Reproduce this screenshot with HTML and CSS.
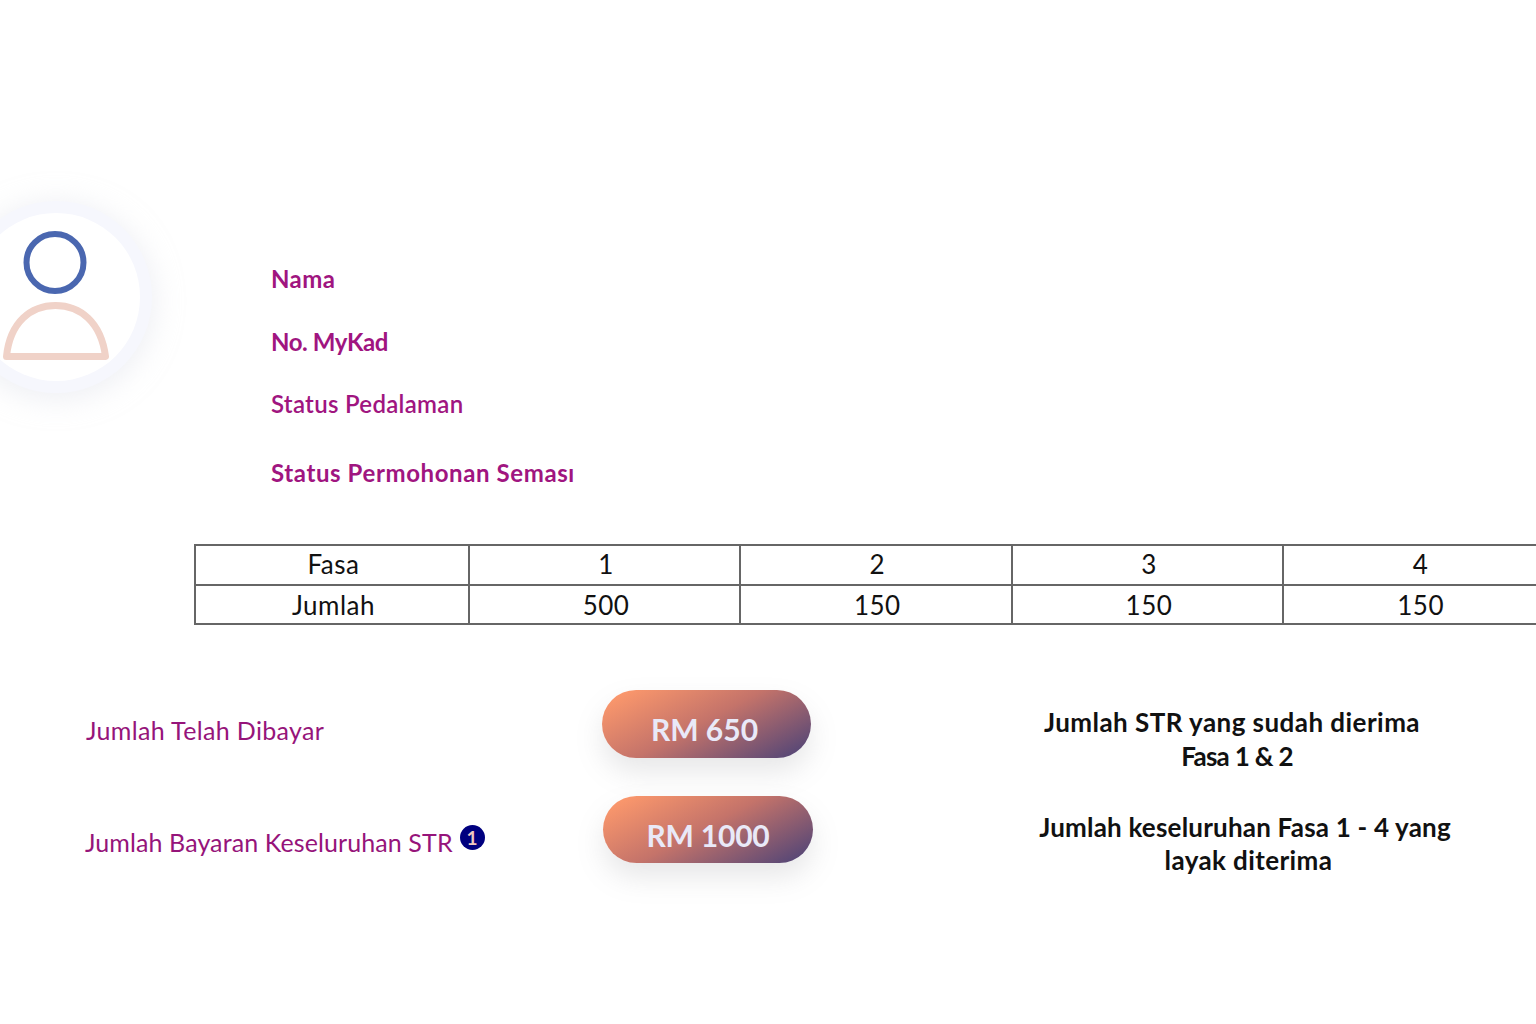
FILE: index.html
```html
<!DOCTYPE html>
<html lang="ms">
<head>
<meta charset="utf-8">
<title>Maklumat STR</title>
<link rel="stylesheet" href="styles.css">
</head>
<body>
<main class="page">
  <section class="profile">
    <div class="avatar">
      <svg class="avatar-icon" width="106" height="130" viewBox="0 0 106 130" aria-hidden="true">
        <circle cx="52" cy="31.500" r="28.500" class="head"/>
        <path d="M3.500 125.500C7 91 28 74.500 52.500 74.500S98 91 102.500 125.500Z" class="torso"/>
      </svg>
    </div>
    <ul class="fields">
      <li class="field field-name">Nama</li>
      <li class="field field-id">No. MyKad</li>
      <li class="field field-area">Status Pedalaman</li>
      <li class="field field-status">Status Permohonan Semasɪ</li>
    </ul>
  </section>

  <table class="phases">
    <tbody>
      <tr class="phase-head"><th>Fasa</th><td>1</td><td>2</td><td>3</td><td>4</td></tr>
      <tr class="phase-amount"><th>Jumlah</th><td>500</td><td>150</td><td>150</td><td>150</td></tr>
    </tbody>
  </table>

  <section class="payments">
    <div class="payment payment-paid">
      <p class="payment-label">Jumlah Telah Dibayar</p>
      <div class="pill">RM 650</div>
      <p class="payment-note"><span class="note-line">Jumlah STR yang sudah dierima</span><span class="note-line note-sub">Fasa 1 &amp; 2</span></p>
    </div>
    <div class="payment payment-total">
      <p class="payment-label">Jumlah Bayaran Keseluruhan STR <span class="badge">1</span></p>
      <div class="pill">RM 1000</div>
      <p class="payment-note"><span class="note-line">Jumlah keseluruhan Fasa 1 - 4 yang</span><span class="note-line note-sub">layak diterima</span></p>
    </div>
  </section>
</main>
</body>
</html>
```
FILE: styles.css
```css
* { box-sizing: border-box; }
html, body { margin: 0; height: 100%; }
body {
  background: #fff;
  overflow: hidden;
  font-family: Lato, "Noto Sans", sans-serif;
}
.page { width: 1536px; height: 1024px; padding-top: 200px; overflow: hidden; }

.profile { display: flex; height: 344px; }
.avatar {
  flex: none;
  width: 168px;
  height: 168px;
  margin: 13px 0 0 -28px;
  display: flex;
  justify-content: center;
  padding-top: 18px;
  border-radius: 50%;
  background: #fff;
  box-shadow: 0 0 0 12px #f6f7fd, 0 4px 26px 16px rgba(225, 228, 235, .5);
}
.avatar-icon { flex: none; display: block; }
.head { fill: none; stroke: #4a67b0; stroke-width: 6; }
.torso { fill: none; stroke: #f0d2c8; stroke-width: 7; stroke-linejoin: round; }

.fields { list-style: none; margin: 0 0 0 131px; padding: 64px 0 0; }
.field {
  color: #a01580;
  font-size: 24px;
  font-weight: 700;
  line-height: 30px;
  white-space: nowrap;
}
.field-name { letter-spacing: .4px; }
.field-id { margin-top: 33px; letter-spacing: -.4px; }
.field-area { margin-top: 32px; font-weight: 600; letter-spacing: .3px; }
.field-status { margin-top: 39px; letter-spacing: .6px; }

.phases {
  width: 1362px;
  margin-left: 194px;
  border-collapse: collapse;
  table-layout: fixed;
  color: #111;
  font-size: 26px;
  letter-spacing: .5px;
  text-align: center;
}
.phases th, .phases td {
  height: 39.500px;
  padding: 0 0 0 3px;
  border: 2px solid #666;
  font-weight: 400;
  line-height: 1;
}
.phases th { width: 274px; }
.phases td:nth-child(2) { width: 271px; }
.phase-head th, .phase-head td { padding-bottom: 1px; }
.phase-amount th, .phase-amount td { padding-top: 1px; }

.payments { margin-top: 65px; }
.payment { display: flex; align-items: flex-start; }
.payment-paid { height: 106px; padding-left: 86px; }
.payment-total { padding-left: 85px; }
.payment-label {
  margin: 0;
  color: #96147a;
  font-size: 25px;
  line-height: 32px;
  white-space: nowrap;
}
.payment-paid .payment-label { width: 516px; margin-top: 24px; letter-spacing: .35px; }
.payment-total .payment-label {
  width: 518px;
  margin-top: 30px;
  display: flex;
  align-items: flex-start;
  gap: 7px;
  letter-spacing: .1px;
}
.badge {
  display: flex;
  width: 25px;
  height: 25px;
  margin-top: -1px;
  align-items: center;
  justify-content: center;
  border-radius: 50%;
  background: #00007f;
  color: #f0c8c0;
  font-size: 19px;
  font-weight: 700;
}
.pill {
  flex: none;
  width: 209px;
  height: 68px;
  display: flex;
  align-items: center;
  justify-content: center;
  padding: 10px 4px 0 0;
  border-radius: 34px;
  background: linear-gradient(152deg, #ff9a6c 4%, #c4736a 48%, #4d4377 98%);
  color: #e9e9f8;
  font-size: 30px;
  font-weight: 700;
  white-space: nowrap;
  box-shadow: 0 14px 28px rgba(120, 120, 130, .18);
}
.payment-total .pill { width: 210px; height: 67px; padding-right: 0; letter-spacing: -.2px; }
.payment-note {
  margin: 0;
  color: #111;
  font-size: 26px;
  font-weight: 700;
  text-align: center;
  white-space: nowrap;
}
.note-line { display: block; line-height: 34px; }
.payment-paid .payment-note { width: 390px; margin: 15px 0 0 226px; letter-spacing: .45px; }
.payment-paid .note-sub { padding-left: 10px; letter-spacing: -.7px; }
.payment-total .payment-note { width: 416px; margin: 15px 0 0 224px; letter-spacing: .2px; }
.payment-total .note-line { line-height: 33px; }
.payment-total .note-sub { padding-left: 7px; letter-spacing: .4px; }
```
